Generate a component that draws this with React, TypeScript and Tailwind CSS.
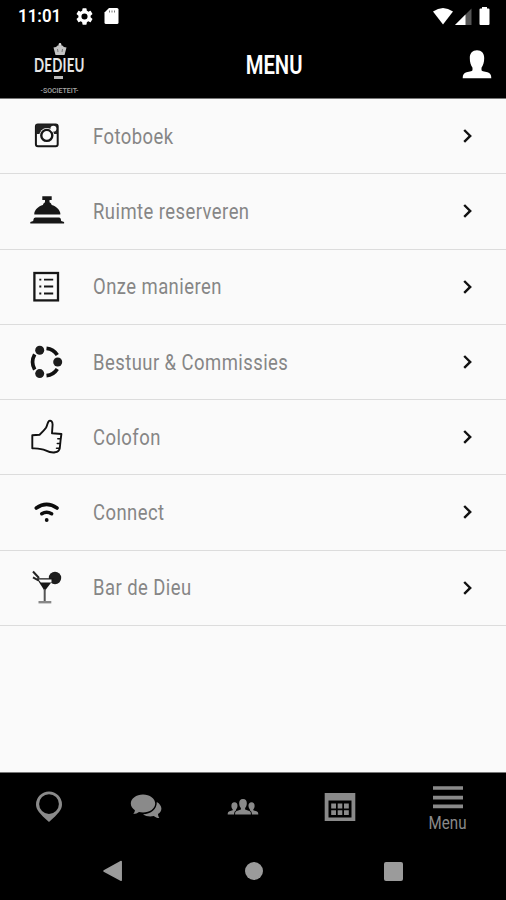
import React from 'react';

const CameraIcon = () => (
  <svg width="40" height="40" viewBox="0 0 40 40">
    <rect x="8.9" y="8.6" width="21.8" height="21.6" rx="2" fill="none" stroke="#161616" strokeWidth="2" />
    <path d="M9 8.6H30V18H26.5A7 7 0 0 0 13 18H9Z" fill="#222" />
    <circle cx="19.8" cy="19.4" r="7.4" fill="#fafafa" />
    <circle cx="19.8" cy="19.4" r="5.5" fill="none" stroke="#161616" strokeWidth="2.4" />
    <circle cx="26.4" cy="12.8" r="3" fill="#fafafa" />
  </svg>
);

const BellIcon = () => (
  <svg width="40" height="40" viewBox="0 0 40 40" fill="#171717">
    <path d="M15.3 5.3h9.4v3.6h-2.2v2.4c1 .5 1.8 1.3 2.2 2.6c4.6 1.3 7.8 4.6 8.6 8.2v1.5H7.3v-1.5c.8-3.6 4-6.9 8.6-8.2c.4-1.3 1.2-2.1 2.1-2.6V8.900h-2.7z" />
    <path d="M8.5 26.6H32c1.2 0 2 1.1 2.2 3.4l2.9 1v1.6H3.3V31l2.9-1c.2-2.3 1.1-3.4 2.3-3.4z" />
  </svg>
);

const ListIcon = () => (
  <svg width="40" height="40" viewBox="0 0 40 40" stroke="#161616" fill="none">
    <rect x="7.4" y="6" width="23.6" height="27.4" strokeWidth="2.3" />
    <path d="M12.3 12.7h2M12.3 19.5h2M12.3 26.5h2" strokeWidth="1.8" />
    <path d="M17 12.7h9.2M17 19.5h9.2M17 26.5h9.2" strokeWidth="1.8" />
  </svg>
);

const CommunityIcon = () => (
  <svg width="40" height="40" viewBox="0 0 40 40">
    <g fill="none" stroke="#111" strokeWidth="3.7">
      <path d="M7.7 12.3Q3.4 20 7.7 27.7" />
      <path d="M19.5 6.3Q26.5 7 30.3 13" />
      <path d="M19.5 33.7Q26.5 33 30.3 27" />
    </g>
    <g fill="#1c1c1c">
      <circle cx="12.7" cy="8.2" r="4.5" />
      <circle cx="30.7" cy="20" r="4.5" />
      <circle cx="12.7" cy="31.6" r="4.5" />
    </g>
  </svg>
);

const ThumbIcon = () => (
  <svg width="40" height="40" viewBox="0 0 40 40" fill="none" stroke="#111" strokeLinejoin="round" strokeLinecap="round">
    <path
      d="M5.3 18.3L12.6 17.7C15 15.5 17.5 13 19 10.8C20.6 8 20.5 5 22 3.9C24.3 3 25.5 5 25.6 7.5L25 16.3L34.4 17L33.6 23L32.8 31C32.3 34 30.5 35 28 35.3C24.5 36 21 34.5 18.5 33.3C14.5 31.6 10 31.6 5.3 31.3Z"
      strokeWidth="1.9"
    />
    <path d="M30.8 21.8h2.5M30.3 26.5h2.5M29.5 31.3h2.5" strokeWidth="1.5" />
  </svg>
);

const WifiIcon = () => (
  <svg width="40" height="40" viewBox="0 0 40 40">
    <g fill="none" stroke="#0c0c0c" strokeWidth="3.6" strokeLinecap="round">
      <path d="M9.3 16Q19.6 8.8 30 16" />
      <path d="M14.8 21.7Q19.6 18.7 24.6 21.7" />
    </g>
    <circle cx="19.7" cy="28" r="1.9" fill="#0c0c0c" />
  </svg>
);

const CocktailIcon = () => (
  <svg width="40" height="40" viewBox="0 0 40 40">
    <circle cx="28" cy="10" r="6.2" fill="#1d1d1d" />
    <path d="M9.5 10.2H27.5L17.7 23Z" fill="#171717" />
    <path d="M11.5 11.6h13v2.8H13.8z" fill="#fafafa" />
    <path d="M6 3.5L12 10M6 9.3L11.5 12.5" stroke="#222" strokeWidth="2" />
    <path d="M17.7 21V33.5" stroke="#555" strokeWidth="2" />
    <path d="M11.5 34.2H24.3" stroke="#888" strokeWidth="2.4" />
  </svg>
);

const menuItems = [
  { label: 'Fotoboek', Icon: CameraIcon },
  { label: 'Ruimte reserveren', Icon: BellIcon },
  { label: 'Onze manieren', Icon: ListIcon },
  { label: 'Bestuur & Commissies', Icon: CommunityIcon },
  { label: 'Colofon', Icon: ThumbIcon },
  { label: 'Connect', Icon: WifiIcon },
  { label: 'Bar de Dieu', Icon: CocktailIcon },
];

const StatusBar = () => (
  <div className="flex h-8 items-center pr-4 pl-[18px]">
    <span className="w-[58px] origin-left scale-x-[0.94] text-[18px] leading-none font-semibold">11:01</span>
    <svg width="17" height="17" viewBox="2 2 20 20" fill="#fff">
      <path d="M19.14 12.94c.04-.3.06-.61.06-.94s-.02-.64-.07-.94l2.03-1.58a.49.49 0 0 0 .12-.61l-1.92-3.32a.49.49 0 0 0-.59-.22l-2.39.96a7 7 0 0 0-1.62-.94l-.36-2.54a.48.48 0 0 0-.48-.41h-3.84a.47.47 0 0 0-.47.41l-.36 2.54c-.59.24-1.13.57-1.62.94l-2.39-.96a.47.47 0 0 0-.59.22L2.74 8.87a.47.47 0 0 0 .12.61l2.03 1.58a7 7 0 0 0 0 1.88l-2.03 1.58a.49.49 0 0 0-.12.61l1.92 3.32c.12.22.37.29.59.22l2.39-.96c.5.38 1.03.7 1.62.94l.36 2.54c.05.24.24.41.48.41h3.84c.24 0 .44-.17.47-.41l.36-2.54a7 7 0 0 0 1.62-.94l2.39.96c.22.08.47 0 .59-.22l1.92-3.32a.47.47 0 0 0-.12-.61zM12 15.6a3.6 3.6 0 1 1 0-7.2a3.6 3.6 0 0 1 0 7.2z" />
    </svg>
    <svg className="ml-[11px]" width="15" height="16" viewBox="0 0 15 16">
      <path d="M5 0h8q1.500 0 1.500 1.500v13q0 1.500-1.500 1.500H2q-1.500 0-1.500-1.500V4.500z" fill="#fff" />
      <path d="M5.500 2.500v2M8 2.500v2M10.500 2.500v2" stroke="#777" strokeWidth="1" />
    </svg>
    <svg className="ml-auto" width="58" height="18" viewBox="0 0 58 18">
      <path d="M1 4.500Q11 -2.500 21 4.500L11 17.500Z" fill="#fff" />
      <path d="M39.500 1.500V18H23Z" fill="#555" />
      <path d="M33.500 7.500V18H23Z" fill="#fff" />
      <path d="M50 1.500V0h5v1.500h1.500q1 0 1 1V17q0 1-1 1h-8q-1 0-1-1V2.500q0-1 1-1z" fill="#fff" />
    </svg>
  </div>
);

const Logo = () => (
  <div className="flex w-[119px] flex-col items-center pt-[11px]">
    <svg width="14" height="13" viewBox="0 0 14 13">
      <circle cx="7" cy="1.300" r="1.300" fill="#ddd" />
      <path d="M.5 4.500L3 4Q5 1.500 7 2Q9 1.500 11 4L13.500 4.500L11.500 12H2.500Z" fill="#c4c4c4" />
      <path d="M5 9L4.500 6M9 9L9.500 6" stroke="#777" strokeWidth="1" />
    </svg>
    <div className="-mt-[1px] scale-x-[0.74] font-['Lato'] text-[18px] leading-[20px] font-bold tracking-[0.3px] text-[#e6e6e6]">DEDIEU</div>
    <div className="mt-[1px] mr-[2px] h-[3px] w-[9px] bg-[#bbb]" />
    <div className="mt-[8px] text-[7px] leading-[8px] font-medium whitespace-nowrap text-[#a8a8a8]">-SOCIETEIT-</div>
  </div>
);

const Header = () => (
  <div className="flex h-[66px] items-start">
    <Logo />
    <div className="flex-1 pt-[19px] pl-[17px] text-center text-[25px] leading-[30px] font-semibold">
      <span className="inline-block scale-x-[0.81]">MENU</span>
    </div>
    <svg className="mt-[18px] mr-[14px] ml-[49px]" width="30" height="30" viewBox="0 0 30 30" fill="#fff">
      <path d="M15 .3c4.500 0 7.200 2.900 7.200 7.700c0 4-1 7.500-2.700 9.700v2c0 .8.5 1.200 1.500 1.500l4.500 1.100c2.600.8 3.800 2.300 3.800 6H.7c0-3.700 1.200-5.200 3.800-6L9 21.200c1-.3 1.500-.7 1.500-1.500v-2C8.800 15.500 7.800 12 7.800 8C7.800 3.200 10.500.3 15 .3z" />
    </svg>
  </div>
);

const TabBar = () => (
  <div className="flex h-[70px] border-t border-[#777] text-[#8a8a8a]">
    <div className="flex w-[97px] shrink-0 items-center justify-center pb-[2px]">
      <svg width="28" height="32" viewBox="0 0 28 32">
        <path fillRule="evenodd" fill="currentColor" d="M14 .5a13 13 0 0 1 13 13c0 5-3.500 9-13 17.500C4.500 22.500 1 18.500 1 13.500a13 13 0 0 1 13-13zM14 3.200a9.900 9.900 0 1 0 0 19.800a9.900 9.900 0 0 0 0-19.800z" />
      </svg>
    </div>
    <div className="flex w-[97px] shrink-0 items-center justify-center pb-[1px]">
      <svg width="32" height="26" viewBox="0 0 32 26" fill="currentColor">
        <path d="M13 .5c6.800 0 12.200 4 12.200 9s-5.400 9-12.200 9c-1.500 0-2.800-.2-4-.5c-1.600 1.200-3.300 1.900-5.800 2c1-1.200 1.600-2.400 1.700-3.800C2.400 14.600.8 12.200.8 9.500c0-5 5.400-9 12.200-9z" />
        <path d="M26.800 8c2.800 1.500 4.600 4 4.600 6.500c0 2.300-1.300 4.200-3.400 5.600c.1 1.600.4 2.700 1.300 4c-2.300-.1-4-.8-5.500-2.100c-4.300.9-8 .2-10.800-1.800c8 0 14-5 13.800-12.200z" />
      </svg>
    </div>
    <div className="flex w-[97px] shrink-0 items-center justify-center pb-[2px]">
      <svg width="32" height="16" viewBox="0 0 32 16" fill="currentColor">
        <path d="M16 0c2.700 0 4 1.800 3.800 4.600c-.1 2-.8 3.500-1.700 4.500v1.500l4.200 1.500c1.200.5 1.600 1.300 1.600 3.400H8.100c0-2.100.4-2.900 1.600-3.400l4.200-1.500V9.100c-.9-1-1.600-2.500-1.700-4.500C12 1.800 13.300 0 16 0z" />
        <path d="M7.500 3.200c2 0 3.200 1.500 3 3.700c-.1 1.500-.7 2.700-1.400 3.400v1.200c-1.500.7-2 1.800-2 4H.7c0-2 .5-2.800 1.800-3.200l3.200-1v-1C5 9.600 4.400 8.400 4.400 6.900c-.1-2.200 1-3.700 3.100-3.700z" />
        <path d="M24.500 3.200c-2 0-3.200 1.500-3 3.700c.1 1.500.7 2.700 1.400 3.400v1.200c1.500.7 2 1.800 2 4h6.400c0-2-.5-2.800-1.800-3.200l-3.200-1v-1c.7-.7 1.300-1.900 1.300-3.400c.1-2.200-1-3.700-3.100-3.700z" />
      </svg>
    </div>
    <div className="flex w-[97px] shrink-0 items-center justify-center pb-[2px]">
      <svg width="32" height="28" viewBox="0 0 32 28">
        <path fillRule="evenodd" fill="currentColor" d="M.7 0h30.600v28H.7zM4.500 7.500v17h23v-17z" />
        <path d="M7.200 10.500h4.800v5H7.200zM13.700 10.500h4.600v5h-4.600zM20 10.500h4.800v5H20zM7.200 17.200h4.800v4.800H7.200zM13.700 17.200h4.600v4.800h-4.600zM20 17.200h4.800v4.800H20z" fill="currentColor" />
      </svg>
    </div>
    <div className="flex flex-1 flex-col items-center pt-[13px] pl-[1px]">
      <svg width="30" height="23" viewBox="0 0 30 23" fill="currentColor">
        <path d="M0 .3h30v3.400H0zM0 9.800h30v3.700H0zM0 18.500h30v3.800H0z" />
      </svg>
      <span className="mt-[3px] scale-x-[0.84] text-[18px] leading-[22px]">Menu</span>
    </div>
  </div>
);

const SystemNav = () => (
  <div className="flex flex-1 items-start justify-between pt-[18px] pr-[103px] pl-[102px]">
    <svg width="21" height="22" viewBox="0 0 21 22">
      <path d="M19.200 1.500v18.800L2 11Z" fill="#9b9b9b" stroke="#9b9b9b" strokeWidth="1.500" strokeLinejoin="round" />
    </svg>
    <div className="mt-[2px] size-[18px] rounded-full bg-[#9b9b9b]" />
    <div className="mt-[2px] size-[19px] rounded-[2px] bg-[#9b9b9b]" />
  </div>
);

const App = () => {
  return (
    <div className="flex h-[900px] w-[506px] flex-col overflow-hidden bg-black font-['Roboto',sans-serif] text-white">
      <StatusBar />
      <Header />
      <div className="h-[674px] border-t border-[#777] bg-[#fafafa]">
        {menuItems.map(({ label, Icon }) => (
          <div key={label} className="flex h-[75.25px] items-center border-b border-[#dcdcdc] pr-[31px] pl-[27px]">
            <Icon />
            <span className="ml-[26px] origin-left scale-x-[0.82] pt-[1px] text-[22.5px] font-normal tracking-[0.55px] whitespace-nowrap text-[#868686]">
              {label}
            </span>
            <svg className="ml-auto" width="16" height="16" viewBox="0 0 16 16">
              <path d="M5.200 2L11.200 7.900L5.200 13.800" fill="none" stroke="#111" strokeWidth="2.400" />
            </svg>
          </div>
        ))}
      </div>
      <TabBar />
      <SystemNav />
    </div>
  );
};

export default App;
